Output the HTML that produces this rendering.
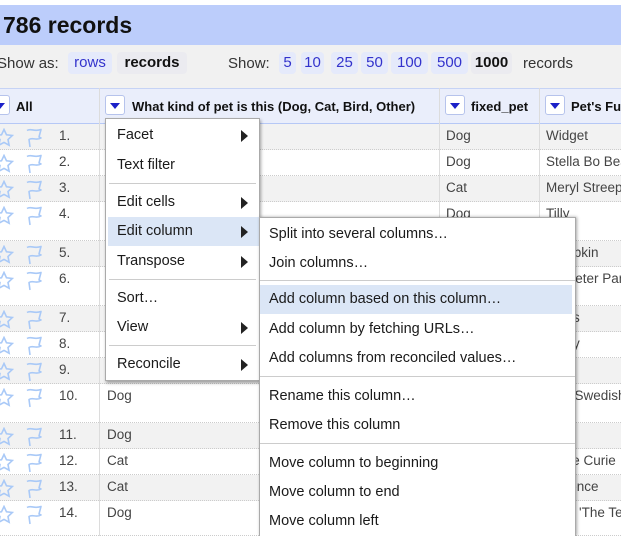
<!DOCTYPE html>
<html><head><meta charset="utf-8"><style>
*{box-sizing:border-box;margin:0;padding:0}
body{width:621px;height:536px;overflow:hidden;background:#fff;font-family:"Liberation Sans",Arial,sans-serif;position:relative}
.a{position:absolute;white-space:nowrap}
#top{left:0;top:5px;width:621px;height:40px;background:#bccdfb}
#top b{position:absolute;left:3px;top:7px;font-size:23px;color:#111}
#bar{left:0;top:45px;width:621px;height:43px;background:#f1f1f1;font-size:15px;color:#333}
.p{position:absolute;top:7px;height:22px;line-height:22px;border-radius:4px;background:#e5eafb;color:#33c;text-align:center}
.p.s{background:#ebebf0;color:#111;font-weight:bold}
#hd{left:0;top:88px;width:621px;height:37px;background:#eaeefb;border-top:1px solid #c6d3f5;border-bottom:2px solid #b6c8f6;font-size:13px;font-weight:bold;color:#111;overflow:hidden}
.dd{position:absolute;top:6px;width:20px;height:20px;background:#fff;border:1px solid #b6c3ec;border-radius:3px}
.dd:after{content:"";position:absolute;left:4px;top:7px;border-left:5px solid transparent;border-right:5px solid transparent;border-top:6px solid #1b20c8}
.row{position:absolute;left:0;width:621px;border-bottom:1px dotted #ccc;font-size:13.5px;color:#444;overflow:hidden}
.row.g{background:#f2f2f2}
.row span{position:absolute;top:4px;white-space:nowrap}
.vl{position:absolute;top:88px;bottom:0;width:1px;background:#dcdcdc}
.menu{position:absolute;background:#fff;border:1px solid #aaa;box-shadow:1px 2px 3px rgba(0,0,0,.35);font-size:14.5px;color:#1a1a1a;overflow:hidden}
.mi{position:absolute;left:0;right:0;height:29px;line-height:29px;white-space:nowrap}
.mi.h{background:#dbe6f6}
.sep{position:absolute;height:1px;background:#ccc}
.ar{position:absolute;right:11px;top:9px;border-top:6px solid transparent;border-bottom:6px solid transparent;border-left:7px solid #222}
</style></head><body>
<div class="a" id="top"><b>786 records</b></div>
<div class="a" id="bar">
<span class="a" style="left:-3px;top:10px">Show as:</span>
<span class="p" style="left:68px;width:44px">rows</span>
<span class="p s" style="left:117px;width:70px">records</span>
<span class="a" style="left:228px;top:10px">Show:</span>
<span class="p" style="left:279px;width:17px">5</span>
<span class="p" style="left:301px;width:23px">10</span>
<span class="p" style="left:331px;width:27px">25</span>
<span class="p" style="left:361px;width:27px">50</span>
<span class="p" style="left:391px;width:37px">100</span>
<span class="p" style="left:431px;width:37px">500</span>
<span class="p s" style="left:471px;width:41px">1000</span>
<span class="a" style="left:523px;top:10px">records</span>
</div>
<div class="a" id="hd">
<div class="dd" style="left:-10px"></div><span class="a" style="left:16px;top:10px">All</span>
<div class="dd" style="left:105px"></div><span class="a" style="left:132px;top:10px">What kind of pet is this (Dog, Cat, Bird, Other)</span>
<div class="dd" style="left:445px"></div><span class="a" style="left:471px;top:10px">fixed_pet</span>
<div class="dd" style="left:545px"></div><span class="a" style="left:571px;top:10px">Pet's Full Name</span>
</div>
<div id="rows"></div>
<div class="vl" style="left:99px"></div><div class="vl" style="left:439px"></div><div class="vl" style="left:539px"></div>
<script>
var tops=[124,150,176,202,241,267,306,332,358,384,423,449,475,501,536];
var c2=["","","","","","","","","","Dog","Dog","Cat","Cat","Dog"];
var c3=["Dog","Dog","Cat","Dog","Dog","Dog","Dog","Dog","Dog","Dog","Dog","Cat","Cat","Dog"];
var c4=["Widget","Stella Bo Bear","Meryl Streep","Tilly","Pumpkin","Sir Peter Pan","Blues","Daisy","Bop","Lily (Swedish)","Bibi","Marie Curie","Florence","Dora 'The Terror'"];
var h="";
for(var i=0;i<14;i++){var t=tops[i],hh=tops[i+1]-t;
h+='<div class="row'+(i%2==0?' g':'')+'" style="top:'+t+'px;height:'+hh+'px">'+
'<svg style="position:absolute;left:-6px;top:4px" width="20" height="19" viewBox="0 0 20 19"><path d="M10 1.5l2.5 5.3 5.8.7-4.3 4 1.1 5.7L10 14.4l-5.1 2.8 1.1-5.7-4.3-4 5.8-.7z" fill="none" stroke="#a9c9f7" stroke-width="1.6"/></svg>'+
'<svg style="position:absolute;left:24px;top:3px" width="20" height="21" viewBox="0 0 20 21"><path d="M3 3.5C7 1 10 5 17 2.5L15 10l2 1c-5 3-8-1-12 1.5L6 20" fill="none" stroke="#a9c9f7" stroke-width="1.6" stroke-linejoin="round"/></svg>'+
'<span style="left:59px">'+(i+1)+'.</span><span style="left:107px">'+c2[i]+'</span><span style="left:446px">'+c3[i]+'</span><span style="left:546px">'+c4[i]+'</span></div>';}
document.getElementById("rows").innerHTML=h;
</script>
<div class="menu" style="left:105px;top:118px;width:155px;height:263px">
<div class="mi" style="top:2px;padding-left:11px">Facet<i class="ar"></i></div>
<div class="mi" style="top:32px;padding-left:11px">Text filter</div>
<div class="sep" style="left:3px;right:3px;top:64px"></div>
<div class="mi" style="top:69px;padding-left:11px">Edit cells<i class="ar"></i></div>
<div class="mi h" style="top:98px;left:2px;right:0;padding-left:9px">Edit column<i class="ar"></i></div>
<div class="mi" style="top:128px;padding-left:11px">Transpose<i class="ar"></i></div>
<div class="sep" style="left:3px;right:3px;top:160px"></div>
<div class="mi" style="top:165px;padding-left:11px">Sort…</div>
<div class="mi" style="top:194px;padding-left:11px">View<i class="ar"></i></div>
<div class="sep" style="left:3px;right:3px;top:226px"></div>
<div class="mi" style="top:231px;padding-left:11px">Reconcile<i class="ar"></i></div>
</div>
<div class="menu" style="left:259px;top:217px;width:317px;height:319px;border-bottom:none;box-shadow:1px 0 3px rgba(0,0,0,.35)">
<div class="mi" style="top:2px;padding-left:9px">Split into several columns…</div>
<div class="mi" style="top:31px;padding-left:9px">Join columns…</div>
<div class="sep" style="left:0;right:0;top:62px"></div>
<div class="mi h" style="top:67px;right:3px;padding-left:9px">Add column based on this column…</div>
<div class="mi" style="top:97px;padding-left:9px">Add column by fetching URLs…</div>
<div class="mi" style="top:126px;padding-left:9px">Add columns from reconciled values…</div>
<div class="sep" style="left:0;right:0;top:158px"></div>
<div class="mi" style="top:164px;padding-left:9px">Rename this column…</div>
<div class="mi" style="top:193px;padding-left:9px">Remove this column</div>
<div class="sep" style="left:0;right:0;top:225px"></div>
<div class="mi" style="top:231px;padding-left:9px">Move column to beginning</div>
<div class="mi" style="top:260px;padding-left:9px">Move column to end</div>
<div class="mi" style="top:289px;padding-left:9px">Move column left</div>
</div>
</body></html>
